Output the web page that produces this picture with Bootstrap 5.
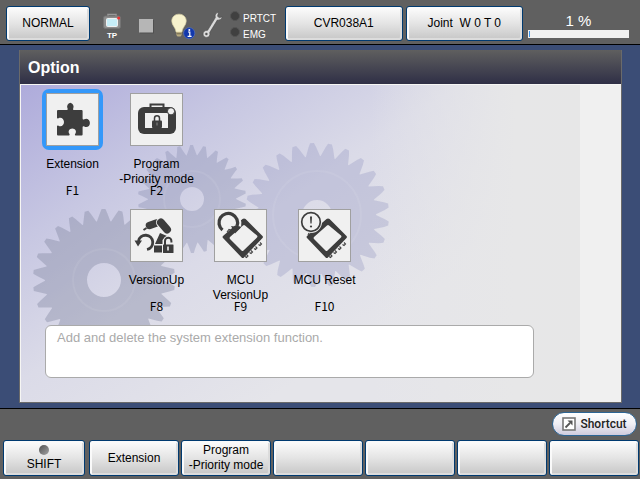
<!DOCTYPE html>
<html lang="en">
<head>
<meta charset="utf-8">
<meta name="viewport" content="width=device-width, initial-scale=1">
<title>Option</title>
<link href="https://cdn.jsdelivr.net/npm/bootstrap@5.3.0/dist/css/bootstrap.min.css" rel="stylesheet">
<style>
  body { font-family: "Liberation Sans", Arial, sans-serif; font-size: 12px; line-height: 15px; color: #000; background: #3b4d76; }
  .bar-area { background: #606060; }
  .top-area { border-bottom: 1px solid #000; padding: 6px 11px 0 6px; min-height: 45px; }
  .bottom-area { border-top: 1px solid #000; padding: 3px 1px 3px 3px; }
  .key-btn { font-size: 12px; line-height: 15px; padding: 0; color: #000; border: 1px solid #003a70; border-radius: 3px;
    background: linear-gradient(#fdfdfd, #e4e4e4 50%, #c6c6c6); box-shadow: inset 1px 1px 0 1px #fafafa, inset -1px -1px 0 1px #dcdcdc; }
  .key-btn:hover, .key-btn:active { color: #000; border-color: #003a70; }
  .mode-btn { width: 84px; height: 35px; }
  .button-pair { gap: 3px; }
  .top-area .wide-btn { height: 35px; flex: 1 1 0; white-space: pre; }
  .status-icons { gap: 2px; margin-left: 6px; }
  .leds { width: 55px; color: #fff; font-size: 10px; line-height: 16px; padding-top: 5px; }
  .led { width: 10px; height: 10px; border-radius: 50%; background: #404040; border: 1px solid #545454; margin-right: 3px; }
  .speed { width: 101px; margin-left: 5px; color: #fff; font-size: 15px; line-height: 18px; padding-top: 6px; }
  .speed .progress { height: 8px; border-radius: 0; background: #f0f0f0; padding: 1px; }
  .speed .progress-bar { background: #3b94ea; }
  .option-window { margin: 5px 18px 5px 19px; border: 1px solid #6a6a6a; border-top: 0; }
  .window-title { height: 34px; font-size: 16px; line-height: 36px; padding-left: 8px; background: linear-gradient(#5f5f5f, #2f2f46); }
  .panel { border: solid #f6f6f4; border-width: 1px 0 0 1px;
    background: linear-gradient(90deg, transparent 350px, #e7e7e8 495px, #e7e7e7 559px, #f0f0f0 559px),
      linear-gradient(146deg, #aeabdb 0, #c7c7e2 130px, #dbdbe8 245px, #e5e5ea 400px); }
  .gears { left: 0; top: 0; }
  .tiles { grid-template-columns: repeat(4, 83px); column-gap: 1px; row-gap: 8px; padding: 4px 0 0 10px; }
  .tile { border: 0; padding: 0; background: none; color: #000; white-space: nowrap; }
  .tile-frame { padding: 4px; border-radius: 7px; }
  .tile.active .tile-frame { background: #3498fa; }
  .tile-frame svg { width: 53px; height: 53px; border: 1px solid #a0a0a0; background: #f0f0f0; }
  .tile-label { height: 25px; margin-top: 7px; }
  .fkey { font-family: "Noto Sans CJK JP", sans-serif; line-height: 15px; }
  .second-row { grid-column-start: 2; }
  .hint { margin: 12px 87px 24px 24px; }
  .hint textarea { height: 53px; resize: none; border: 1px solid #aaa; border-radius: 6px; padding: 4px 11px; font-size: 13px; line-height: 16px; color: #aaa; background: #fff; }
  .shortcut-row { padding-right: 2px; }
  .shortcut { font-family: Roboto, sans-serif; font-weight: 500; font-size: 12px; line-height: 22px; width: 85px; height: 24px; padding: 0; gap: 4px;
    border: 1px solid #2c6595; border-radius: 12px; color: #222; background: linear-gradient(#fff, #eeeef4 50%, #cfcbdd); }
  .soft-keys { grid-template-columns: 84px repeat(6, 1fr); gap: 2px; margin-top: 4px; }
  .soft-keys .key-btn { height: 36px; }
  .soft-keys .shift-key { margin-right: 2px; }
  .shift-led { width: 10px; height: 10px; border-radius: 50%; background: linear-gradient(135deg, #505050, #a4a4a4); margin-bottom: 2px; }
</style>
</head>
<body>
<div class="d-flex flex-column min-vh-100">
  <header class="bar-area top-area d-flex align-items-start">
    <button type="button" class="btn key-btn mode-btn">NORMAL</button>
    <div class="status-icons d-flex">
      <svg width="32" height="35" viewBox="0 0 32 35" role="img" aria-label="TP">
        <path d="M12 10V8.500h8V10" fill="none" stroke="#999" stroke-width="1.500"/>
        <rect x="7.500" y="10" width="17" height="12.500" rx="2" fill="#8d8d8d" stroke="#747474"/>
        <rect x="10.500" y="12.500" width="11" height="8" rx="1" fill="#c6eef8" stroke="#f0f0f0"/>
        <circle cx="22.700" cy="12" r="1.500" fill="#e33"/>
        <text x="16" y="31.500" text-anchor="middle" font-size="8" font-weight="700" fill="#fff">TP</text>
      </svg>
      <svg width="32" height="35" viewBox="0 0 32 35" aria-hidden="true">
        <rect x="10" y="14" width="14" height="13.500" fill="#505050"/>
        <rect x="9" y="13" width="14" height="13.500" fill="#b6b6b6"/>
      </svg>
      <svg width="32" height="35" viewBox="0 0 32 35" aria-hidden="true">
        <path d="M15 8.200c-4.400 0-7.200 3-7.200 6.800 0 4.600 4 6.500 4.300 11h5.800c.3-4.500 4.300-6.400 4.300-11 0-3.800-2.800-6.800-7.200-6.800z" fill="#f7f2cd" stroke="#ddd5a7" stroke-width=".7"/>
        <path d="M12.300 26h5.400v3l-1.200 1.500h-3L12.300 29z" fill="#b9ac80"/><path d="M12.500 27.800h5" stroke="#6d654d"/>
        <circle cx="25.200" cy="27.200" r="5.600" fill="#1238ac" stroke="#5872b8" stroke-width=".7"/>
        <path d="M24 26h1.800v4M23.600 30.300h4" fill="none" stroke="#fff" stroke-width="1.200"/><circle cx="25.300" cy="23.900" r="1" fill="#fff"/>
      </svg>
      <svg width="32" height="35" viewBox="0 0 32 35" aria-hidden="true">
        <path d="M20.500 6c-2.600.8-4 3-3.200 5.600L9.600 24.300c-2.600-.2-4.600 1.500-4.600 3.700 0 2 1.500 3.400 3.500 3.400 2.600 0 4-2 3.200-4.800l7.600-12.500c2.500.3 4.300-1 5-3.400l-2.900 1-1.800-1.400z" fill="#dadada" stroke="#484848" stroke-width=".6"/>
        <circle cx="8.400" cy="28" r="1.200" fill="#555"/>
      </svg>
    </div>
    <div class="leds">
      <div class="d-flex align-items-start"><span class="led"></span>PRTCT</div>
      <div class="d-flex align-items-start"><span class="led"></span>EMG</div>
    </div>
    <div class="button-pair d-flex flex-grow-1">
      <button type="button" class="btn key-btn wide-btn">CVR038A1</button>
      <button type="button" class="btn key-btn wide-btn">Joint  W 0 T 0</button>
    </div>
    <div class="speed text-center">
      <div>1 %</div>
      <div class="progress" role="progressbar" aria-label="Speed" aria-valuenow="1" aria-valuemin="0" aria-valuemax="100"><div class="progress-bar" style="width:1%"></div></div>
    </div>
  </header>

  <main class="flex-grow-1 d-flex">
    <section class="option-window flex-grow-1 d-flex flex-column">
      <h1 class="window-title text-white fw-bold mb-0">Option</h1>
      <div class="panel position-relative flex-grow-1 overflow-hidden">
        <svg class="gears position-absolute" width="400" height="317" viewBox="21 85 400 317" aria-hidden="true">
          <g fill-rule="evenodd">
            <path class="gear" data-gear="192,199,54,44,12,26" fill="#878eb0" fill-opacity=".37"/>
            <path class="gear" data-gear="317,215,72,59,15,25" fill="#8a90bd" fill-opacity=".3"/>
            <path class="gear" data-gear="104,280,71,59,17,26" fill="#7d849f" fill-opacity=".38"/>
          </g>
          <g fill="none" stroke="#fff" stroke-opacity=".07" stroke-width="2"><circle cx="192" cy="199" r="28"/><circle cx="317" cy="215" r="44"/><circle cx="104" cy="280" r="31"/></g>
        </svg>
        <div class="tiles d-grid position-relative">
          <button type="button" class="tile active d-flex flex-column align-items-center">
            <span class="tile-frame d-flex"><svg viewBox="1 1 51 51" aria-hidden="true">
              <path fill="#3d3d3d" d="M12 17h8.800c1 0 1.300-.9.600-1.700A4.200 4.200 0 0 1 24.300 9.700a4.200 4.200 0 0 1 3 5.600c-.6.900-.3 1.700.6 1.700h7.700q1 0 1 1v7.300c0 1.200.8 1.500 1.700.9 2.700-1.500 5.600.4 5.600 3.700s-2.900 5.200-5.600 3.600c-1-.5-1.700-.2-1.700.8V41.500q0 1-1 1H29.700c-1 0-1-.8-.4-1.700 1.700-2.500 0-5.300-3-5.300s-4.600 2.800-3 5.300c.6.900.5 1.700-.5 1.700H12q-1 0-1-1V33.500c0-1 .7-1.300 1.500-.7 2.600 1.600 5.500-.4 5.500-3.700s-2.900-5.400-5.500-3.900c-.8.600-1.500.3-1.500-.7V18q0-1 1-1z"/></svg></span>
            <span class="tile-label">Extension</span><span class="fkey">F1</span>
          </button>
          <button type="button" class="tile d-flex flex-column align-items-center">
            <span class="tile-frame d-flex"><svg viewBox="1 1 51 51" aria-hidden="true">
              <path d="M20.500 15v-3.500h13V15" fill="none" stroke="#3d3d3d" stroke-width="2"/>
              <rect x="8" y="14" width="38" height="27" rx="6" fill="#3d3d3d"/>
              <rect x="15" y="20" width="23" height="15" fill="#f0f0f0"/>
              <circle cx="41" cy="18.300" r="3.600" fill="#f0f0f0" stroke="#3d3d3d"/>
              <rect x="22" y="27.500" width="10" height="7.500" rx="1" fill="#3d3d3d"/><path d="M24.500 28v-2.800a2.500 2.500 0 0 1 5 0V28" fill="none" stroke="#3d3d3d" stroke-width="1.500"/>
              <path d="M27 29.500v3" stroke="#888"/></svg></span>
            <span class="tile-label">Program<br>-Priority mode</span><span class="fkey">F2</span>
          </button>
          <button type="button" class="tile second-row d-flex flex-column align-items-center">
            <span class="tile-frame d-flex"><svg viewBox="1 1 51 51" aria-hidden="true">
              <g fill="none" stroke="#3d3d3d"><path d="M19.500 16.500l7-2.500" stroke-width="7.500" stroke-linecap="round"/><path d="M31 13.500l6 7" stroke="#f0f0f0" stroke-width="10" stroke-linecap="round"/>
              <path d="M31 13.500l6 7" stroke-width="8" stroke-linecap="round"/><path d="M13.500 21l3-2" stroke-width="2"/>
              <path d="M8.500 32a7.200 7.200 0 1 1 8.500 8.500" stroke-width="2.800"/></g>
              <path fill="#3d3d3d" d="M4.500 31.500h7.500L8 37.500zM30 24l7 3-4.500 4v4h-7.500zM24 36.500h8v7h-8z"/>
              <path d="M35 35v-3a3.200 3.200 0 0 1 6.400 0v1.500" fill="none" stroke="#f0f0f0" stroke-width="4"/>
              <path d="M35 36v-4a3.200 3.200 0 0 1 6.400 0v1.500" fill="none" stroke="#3d3d3d" stroke-width="2"/>
              <rect x="33" y="35.500" width="10.500" height="8.500" rx=".5" fill="#3d3d3d"/><path d="M38 37.500v4" stroke="#f0f0f0" stroke-width="1.600"/></svg></span>
            <span class="tile-label">VersionUp</span><span class="fkey">F8</span>
          </button>
          <button type="button" class="tile d-flex flex-column align-items-center">
            <span class="tile-frame d-flex"><svg viewBox="1 1 51 51" aria-hidden="true">
              <path d="M46 33.500l1.500 1.500-1.500 1.500-1.500-1M41.500 37.500l1.500 1.500-1.500 1.500-1.500-1M37 41.500l1.500 1.500-1.500 1.500-1.500-1M32.500 45.500l1.500 1.500-1.500 1.500-1.500-1M13 23l2-2.500 3 1" fill="none" stroke="#444" stroke-width="1.100"/>
              <path fill="#3d3d3d" fill-rule="evenodd" d="M30 9.500q1 0 1.600.6L48.500 27q.9 1 0 2L30 48.500q-1.200 1-2.400 0L9 29q-.9-1 0-2L28.500 10zM31 16.500q-1-1-2 0L16 28q-.8 1 0 2L27.500 41.500q1 1 2 0L43 28.500q.9-1 0-2z"/>
              <path d="M9 22A9.300 9.300 0 1 1 24 17" fill="none" stroke="#f0f0f0" stroke-width="6.500"/>
              <path d="M8.500 21A9.300 9.300 0 1 1 23 17" fill="none" stroke="#3d3d3d" stroke-width="3.300"/><path d="M17 17l10 1.500-6 6z" fill="#3d3d3d"/></svg></span>
            <span class="tile-label">MCU<br>VersionUp</span><span class="fkey">F9</span>
          </button>
          <button type="button" class="tile d-flex flex-column align-items-center">
            <span class="tile-frame d-flex"><svg viewBox="1 1 51 51" aria-hidden="true">
              <path d="M46 33.500l1.500 1.500-1.500 1.500-1.500-1M41.500 37.500l1.500 1.500-1.500 1.500-1.500-1M37 41.500l1.500 1.500-1.500 1.500-1.500-1M32.500 45.500l1.500 1.500-1.500 1.500-1.500-1M10 26l1-2 2-1" fill="none" stroke="#444" stroke-width="1.100"/>
              <path fill="#3d3d3d" fill-rule="evenodd" d="M30 9.500q1 0 1.600.6L48.500 27q.9 1 0 2L30 48.500q-1.200 1-2.400 0L9 29q-.9-1 0-2L28.500 10zM31 16.500q-1-1-2 0L16 28q-.8 1 0 2L27.500 41.500q1 1 2 0L43 28.500q.9-1 0-2z"/>
              <circle cx="13" cy="13" r="11" fill="#f0f0f0"/><circle cx="13" cy="13" r="9.300" fill="none" stroke="#3d3d3d" stroke-width="1.700"/>
              <path d="M12 7.500h2l-.4 7h-1.200z" fill="#3d3d3d"/><circle cx="13" cy="17.500" r="1.100" fill="#3d3d3d"/></svg></span>
            <span class="tile-label">MCU Reset</span><span class="fkey">F10</span>
          </button>
        </div>
        <div class="hint position-relative d-flex">
          <textarea class="form-control" aria-label="Description" readonly>Add and delete the system extension function.</textarea>
        </div>
      </div>
    </section>
  </main>

  <footer class="bar-area bottom-area">
    <div class="shortcut-row d-flex justify-content-end">
      <button type="button" class="btn shortcut d-flex align-items-center justify-content-center">
        <svg width="14" height="14" viewBox="0 0 14 14" aria-hidden="true"><rect x="1" y="1" width="12" height="12" fill="#fff" stroke="#777" stroke-width="1.600"/><path d="M3.500 10.500l4.500-4.500" stroke="#555" stroke-width="1.800"/><path d="M5.500 3.500h5v5z" fill="#555"/></svg>
        Shortcut
      </button>
    </div>
    <div class="soft-keys d-grid">
      <button type="button" class="btn key-btn shift-key d-flex flex-column align-items-center justify-content-center"><span class="shift-led"></span>SHIFT</button>
      <button type="button" class="btn key-btn">Extension</button>
      <button type="button" class="btn key-btn text-nowrap">Program<br>-Priority mode</button>
      <button type="button" class="btn key-btn" aria-label="Soft key 3"></button>
      <button type="button" class="btn key-btn" aria-label="Soft key 4"></button>
      <button type="button" class="btn key-btn" aria-label="Soft key 5"></button>
      <button type="button" class="btn key-btn" aria-label="Soft key 6"></button>
    </div>
  </footer>
</div>
<script src="https://cdn.jsdelivr.net/npm/bootstrap@5.3.0/dist/js/bootstrap.bundle.min.js"></script>
<script>
  // Builds each gear outline: tapered teeth around a rim, with a hole in the hub.
  document.querySelectorAll('.gear').forEach(function (gear) {
    var v = gear.dataset.gear.split(',').map(Number);
    var cx = v[0], cy = v[1], tip = v[2], root = v[3], hole = v[4], teeth = v[5];
    var points = [];
    for (var i = 0; i < teeth; i++) {
      [[0, root], [0.25, tip - 4], [0.36, tip], [0.58, tip], [0.7, tip - 4], [0.95, root]].forEach(function (p) {
        var a = (i + p[0]) / teeth * 2 * Math.PI;
        points.push((cx + p[1] * Math.cos(a)).toFixed(1) + ' ' + (cy + p[1] * Math.sin(a)).toFixed(1));
      });
    }
    gear.setAttribute('d', 'M' + points.join('L') + 'ZM' + (cx - hole) + ' ' + cy +
      'a' + hole + ' ' + hole + ' 0 1 0 ' + 2 * hole + ' 0a' + hole + ' ' + hole + ' 0 1 0 ' + -2 * hole + ' 0Z');
  });
</script>
</body>
</html>
